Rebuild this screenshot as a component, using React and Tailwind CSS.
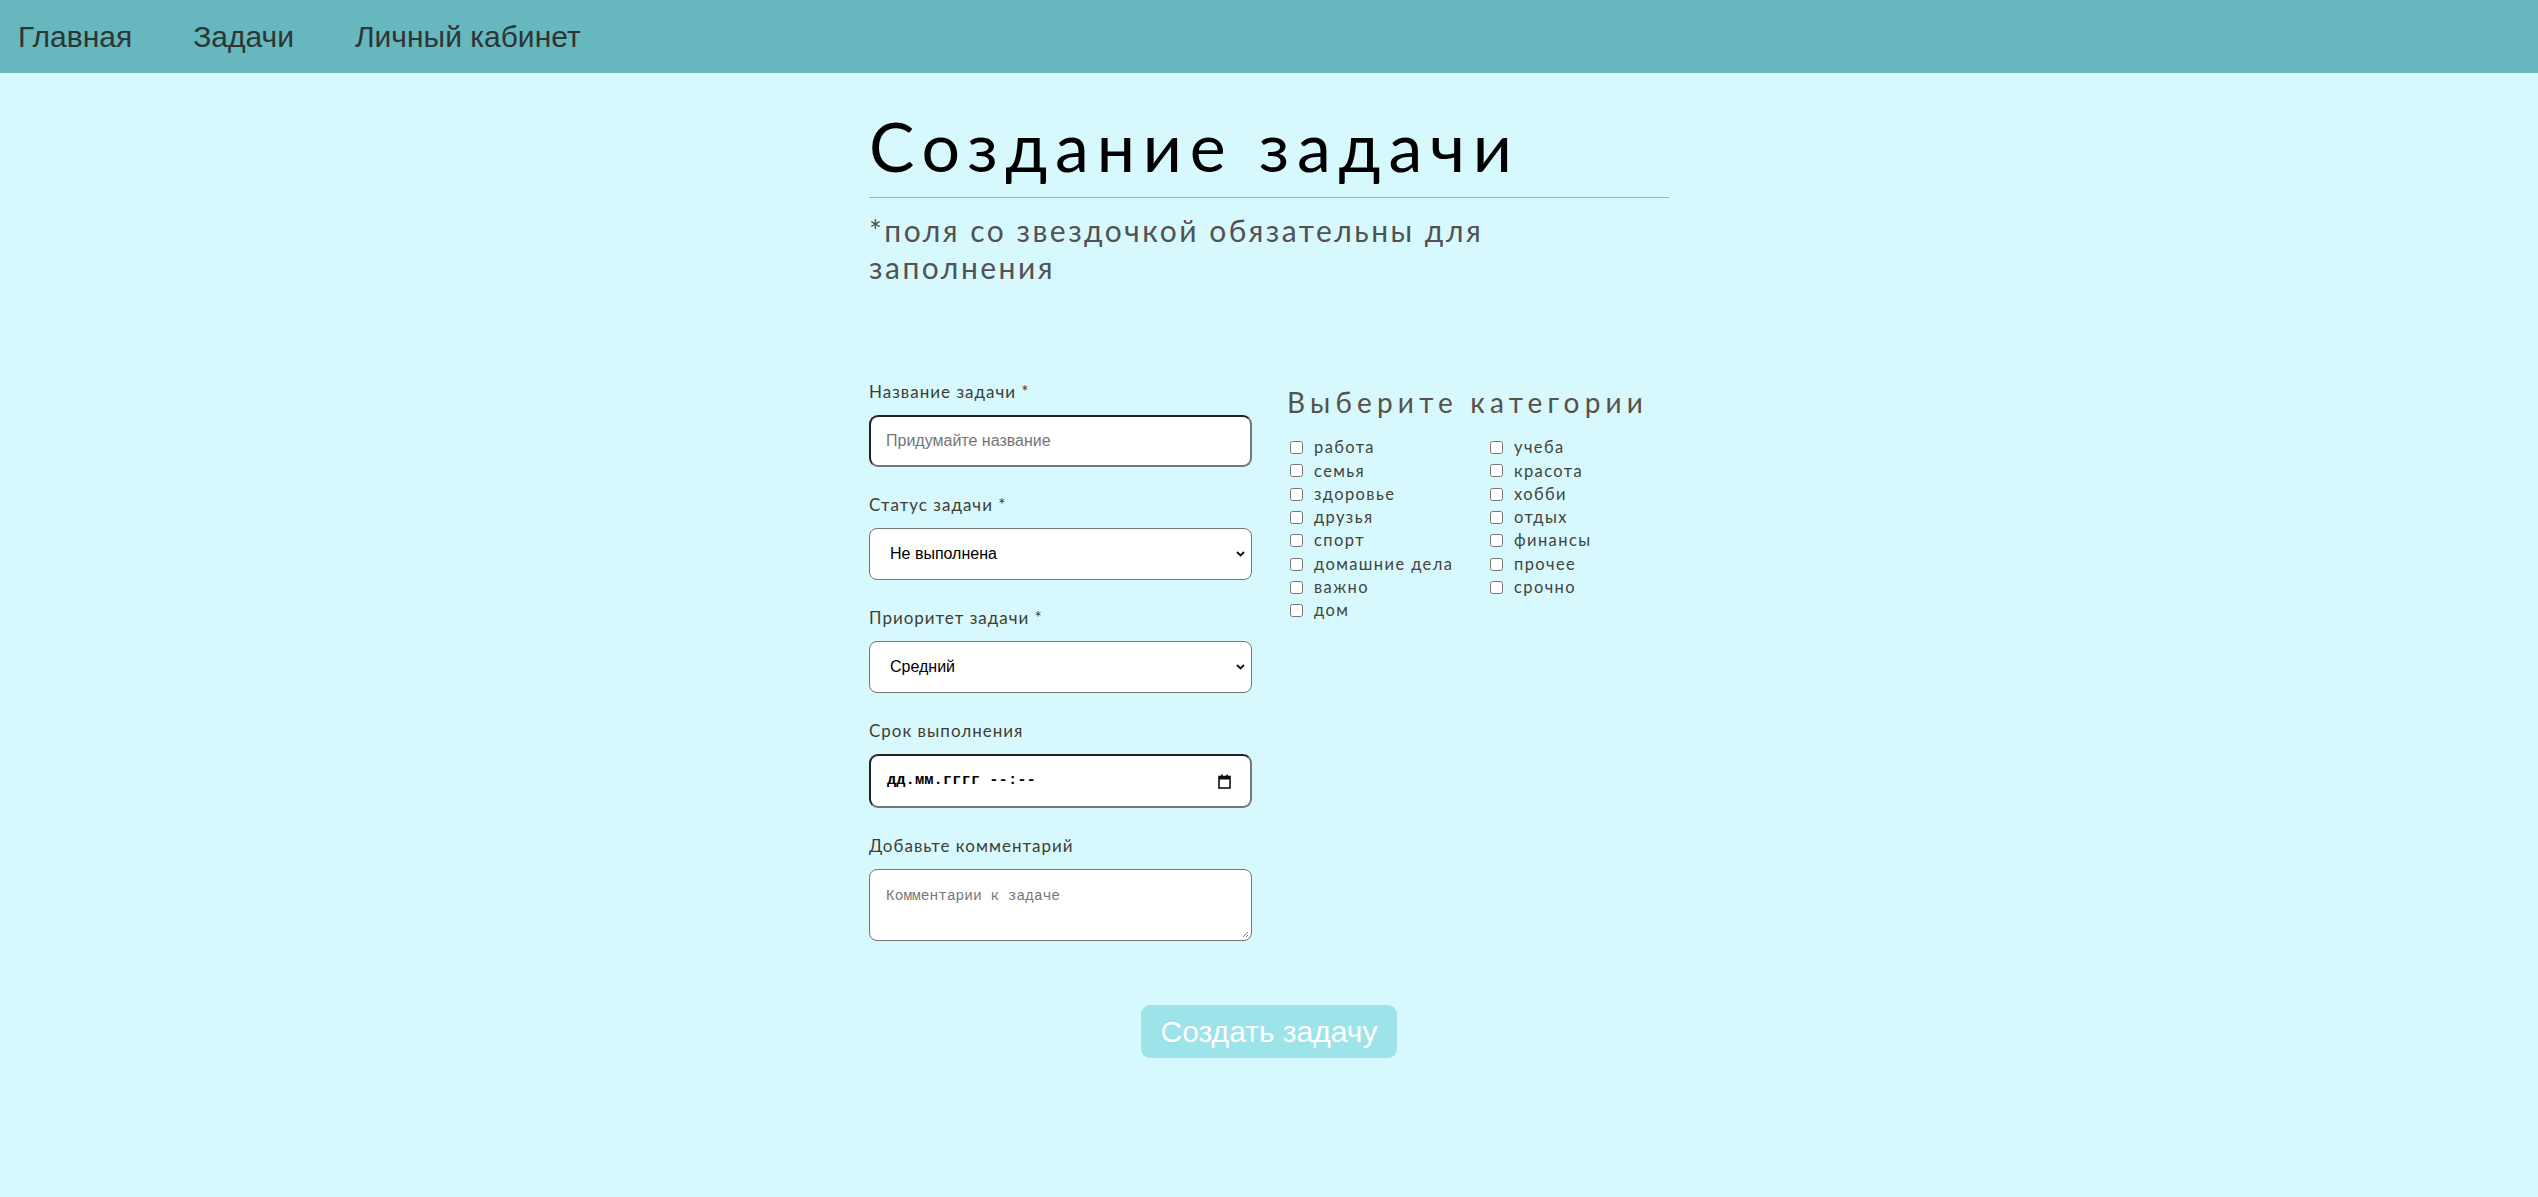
import React from "react";

const CATEGORIES = [
  "работа", "семья", "здоровье", "друзья", "спорт", "домашние дела", "важно", "дом",
  "учеба", "красота", "хобби", "отдых", "финансы", "прочее", "срочно",
];

function Chevron() {
  return (
    <svg width="9" height="6" viewBox="0 0 9 6" className="shrink-0">
      <path d="M1 1 L4.5 4.5 L8 1" fill="none" stroke="#111" strokeWidth="1.8" />
    </svg>
  );
}

function CalendarIcon() {
  return (
    <svg width="13" height="15" viewBox="0 0 13 15" className="shrink-0">
      <rect x="1" y="2.5" width="11" height="11.5" fill="none" stroke="#111" strokeWidth="1.6" />
      <rect x="1" y="2.5" width="11" height="3" fill="#111" />
      <rect x="3" y="0.5" width="1.6" height="3" fill="#111" />
      <rect x="8.4" y="0.5" width="1.6" height="3" fill="#111" />
    </svg>
  );
}

function Label({ children }) {
  return (
    <label className="block h-[20px] leading-[20px] text-[17px] tracking-[1px] text-[#403d33] mb-[13px] font-['Lato',sans-serif]">
      {children}
    </label>
  );
}

export default function App() {
  return (
    <div className="min-h-screen bg-[#d7f9fd]">
      <nav className="h-[73px] bg-[#66b7be] flex items-center pl-[18px] gap-[61px] font-['Liberation_Sans',sans-serif] text-[30px] leading-none text-[#2e3535]">
        <a>Главная</a>
        <a>Задачи</a>
        <a>Личный кабинет</a>
      </nav>

      <main className="w-[800px] mx-auto pt-[39px]">
        <h1 className="text-[68px] leading-none text-black font-['Lato',sans-serif] tracking-[7.8px]">
          Создание задачи
        </h1>
        <hr className="mt-[17px] border-t border-[#a3b1b3]" />
        <p className="mt-[14px] max-w-[660px] text-[30px] leading-[37px] text-[#525252] font-['Lato',sans-serif] tracking-[2.5px]">
          *поля со звездочкой обязательны для заполнения
        </p>

        <form className="mt-[96px] flex gap-[35px]">
          <div className="w-[383px] shrink-0 flex flex-col gap-[28px]">
            <div>
              <Label>Название задачи *</Label>
              <div className="h-[52px] rounded-[9px] border-2 border-t-[#222] border-l-[#222] border-b-[#777] border-r-[#777] bg-white flex items-center pl-[15px] font-['Liberation_Sans',sans-serif] text-[16px] text-[#757575]">
                Придумайте название
              </div>
            </div>
            <div>
              <Label>Статус задачи *</Label>
              <div className="h-[52px] rounded-[8px] border border-[#767676] bg-white flex items-center justify-between pl-[20px] pr-[6px] font-['Liberation_Sans',sans-serif] text-[16px] text-black">
                <span>Не выполнена</span>
                <Chevron />
              </div>
            </div>
            <div>
              <Label>Приоритет задачи *</Label>
              <div className="h-[52px] rounded-[8px] border border-[#767676] bg-white flex items-center justify-between pl-[20px] pr-[6px] font-['Liberation_Sans',sans-serif] text-[16px] text-black">
                <span>Средний</span>
                <Chevron />
              </div>
            </div>
            <div>
              <Label>Срок выполнения</Label>
              <div className="h-[54px] rounded-[9px] border-2 border-t-[#222] border-l-[#222] border-b-[#777] border-r-[#777] bg-white flex items-center justify-between pl-[16px] pr-[19px] font-['Liberation_Mono',monospace] font-bold text-[15.5px] text-black">
                <span>дд.мм.гггг --:--</span>
                <CalendarIcon />
              </div>
            </div>
            <div>
              <Label>Добавьте комментарий</Label>
              <div className="relative h-[72px] rounded-[8px] border border-[#767676] bg-white pl-[16px] pt-[16px] font-['Liberation_Mono',monospace] text-[14.5px] leading-[20px] text-[#777]">
                Комментарии к задаче
                <svg width="7" height="7" viewBox="0 0 7 7" className="absolute right-[2px] bottom-[2px]">
                  <path d="M6 1 L1 6 M6 4 L4 6" stroke="#888" strokeWidth="1" />
                </svg>
              </div>
            </div>
          </div>

          <div className="pt-[6px] font-['Lato',sans-serif]">
            <h2 className="text-[28px] leading-none text-[#57524a] tracking-[5.2px]">Выберите категории</h2>
            <div className="mt-[20px] grid grid-flow-col grid-rows-8 grid-cols-[200px_200px]">
              {CATEGORIES.map((c) => (
                <label key={c} className="h-[23.3px] flex items-center text-[16.5px] text-[#45443c] tracking-[1.4px]">
                  <input type="checkbox" className="w-[13px] h-[13px] m-0 ml-[3px]" />
                  <span className="ml-[11px]">{c}</span>
                </label>
              ))}
            </div>
          </div>
        </form>

        <div className="flex justify-center mt-[64px]">
          <button className="w-[256px] h-[53px] rounded-[9px] bg-[#9de4ea] text-white text-[30px] font-['Liberation_Sans',sans-serif]">
            Создать задачу
          </button>
        </div>
      </main>
    </div>
  );
}
